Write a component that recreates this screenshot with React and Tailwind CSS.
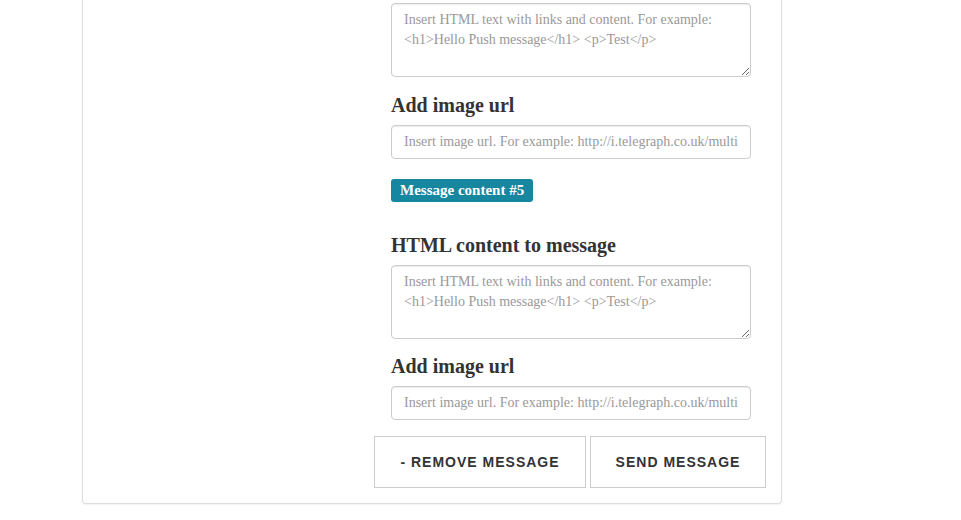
const serif = "font-['Liberation_Serif','Times_New_Roman',serif]"

const fieldBase =
  'block w-[360px] rounded border border-[#ccc] bg-white px-3 py-[6px] text-[14px] leading-[20px] text-[#555] placeholder:text-[#999] shadow-[inset_0_1px_1px_rgba(0,0,0,0.075)] outline-none'

const HtmlField = () => (
  <textarea
    rows={3}
    placeholder="Insert HTML text with links and content. For example: <h1>Hello Push message</h1> <p>Test</p>"
    className={`${fieldBase} h-[74px] resize-y`}
  />
)

const ImageField = () => (
  <input
    placeholder="Insert image url. For example: http://i.telegraph.co.uk/multimedia/archive/02830/cat_2830677b.jpg"
    className={`${fieldBase} h-[34px]`}
  />
)

const Heading = ({ children }) => (
  <h3 className="text-[20px] leading-[22px] font-bold text-[#333]">{children}</h3>
)

const btn =
  'flex h-[52px] items-center justify-center border border-[#ccc] bg-white text-[14px] font-bold uppercase tracking-[1px] text-[#333]'

export default function App() {
  return (
    <div className={`min-h-[520px] bg-white ${serif}`}>
      <div className="ml-[82px] w-[700px] rounded-b border border-t-0 border-[#ddd] bg-white pt-[3px] pb-[15px] shadow-[0_1px_1px_rgba(0,0,0,0.05)]">
        <div className="pl-[308px]">
          <HtmlField />

          <div className="mt-[17px]">
            <Heading>Add image url</Heading>
          </div>
          <div className="mt-[9px]">
            <ImageField />
          </div>

          <div className="mt-[19px]">
            <span className="inline-block rounded-[3px] bg-[#17869f] px-[9px] py-[2px] text-[15px] leading-[19px] font-bold text-white">
              Message content #5
            </span>
          </div>

          <div className="mt-[32px]">
            <Heading>HTML content to message</Heading>
          </div>
          <div className="mt-[9px]">
            <HtmlField />
          </div>

          <div className="mt-[16px]">
            <Heading>Add image url</Heading>
          </div>
          <div className="mt-[9px]">
            <ImageField />
          </div>
        </div>

        <div className="mt-[16px] flex gap-[4px] pl-[291px] font-['Liberation_Sans',Arial,sans-serif]">
          <button className={`${btn} w-[212px]`}>- Remove message</button>
          <button className={`${btn} w-[176px]`}>Send message</button>
        </div>
      </div>
    </div>
  )
}
